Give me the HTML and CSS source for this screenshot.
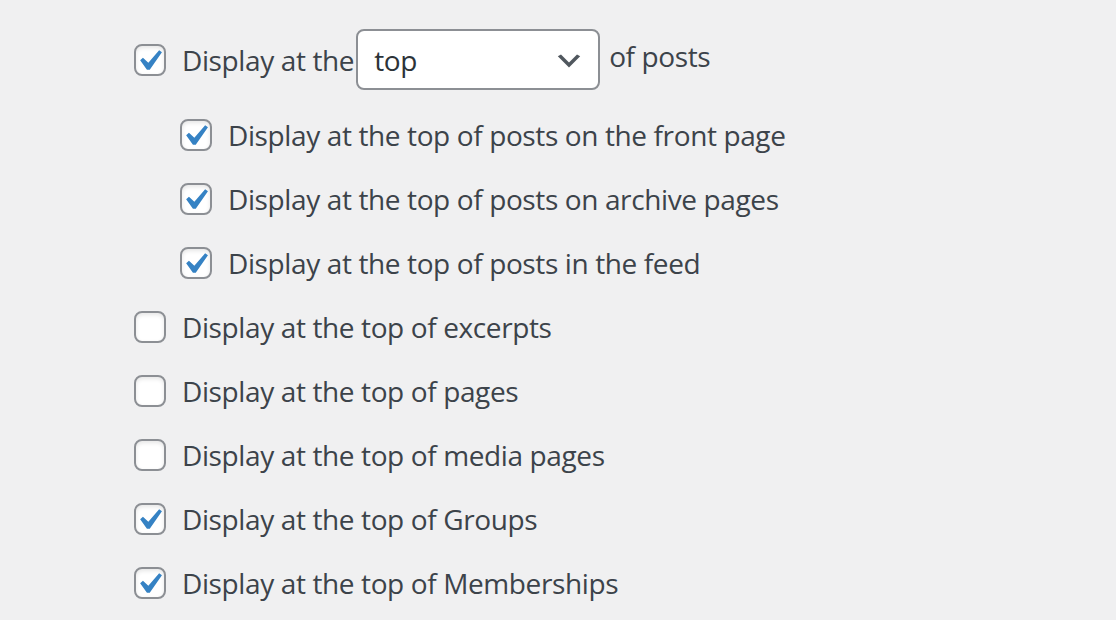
FILE: index.html
```html
<!DOCTYPE html>
<html lang="en">
<head>
  <meta charset="UTF-8" />
  <title>Display settings</title>
  <link rel="stylesheet" href="styles.css">
</head>
<body>
  <fieldset class="options">
    <label class="option option-select">
      <span class="box checked"><svg viewBox="0 0 20 20"><path d="M14.83 4.89l1.34.94-5.81 8.38H9.02L5.78 9.67l1.34-1.25 2.57 2.4z"/></svg></span>
      <span class="text">Display at the</span>
      <span class="select">
        <span>top</span>
        <svg viewBox="0 0 20 20"><path d="M5 6l5 5 5-5 2 1-7 7-7-7 2-1z"/></svg>
      </span>
      <span class="text after">of posts</span>
    </label>

    <label class="option sub">
      <span class="box checked"><svg viewBox="0 0 20 20"><path d="M14.83 4.89l1.34.94-5.81 8.38H9.02L5.78 9.67l1.34-1.25 2.57 2.4z"/></svg></span>
      <span class="text">Display at the top of posts on the front page</span>
    </label>
    <label class="option sub">
      <span class="box checked"><svg viewBox="0 0 20 20"><path d="M14.83 4.89l1.34.94-5.81 8.38H9.02L5.78 9.67l1.34-1.25 2.57 2.4z"/></svg></span>
      <span class="text">Display at the top of posts on archive pages</span>
    </label>
    <label class="option sub">
      <span class="box checked"><svg viewBox="0 0 20 20"><path d="M14.83 4.89l1.34.94-5.81 8.38H9.02L5.78 9.67l1.34-1.25 2.57 2.4z"/></svg></span>
      <span class="text">Display at the top of posts in the feed</span>
    </label>

    <label class="option">
      <span class="box"></span>
      <span class="text">Display at the top of excerpts</span>
    </label>
    <label class="option">
      <span class="box"></span>
      <span class="text">Display at the top of pages</span>
    </label>
    <label class="option">
      <span class="box"></span>
      <span class="text">Display at the top of media pages</span>
    </label>
    <label class="option">
      <span class="box checked"><svg viewBox="0 0 20 20"><path d="M14.83 4.89l1.34.94-5.81 8.38H9.02L5.78 9.67l1.34-1.25 2.57 2.4z"/></svg></span>
      <span class="text">Display at the top of Groups</span>
    </label>
    <label class="option">
      <span class="box checked"><svg viewBox="0 0 20 20"><path d="M14.83 4.89l1.34.94-5.81 8.38H9.02L5.78 9.67l1.34-1.25 2.57 2.4z"/></svg></span>
      <span class="text">Display at the top of Memberships</span>
    </label>
  </fieldset>
</body>
</html>
```

FILE: styles.css
```css
body {
  margin: 0;
  background: #f0f0f1;
  color: #3c434a;
  font-family: 'Open Sans', 'Noto Sans', sans-serif;
  font-size: 28px;
  letter-spacing: -0.38px;
  overflow: hidden;
}

.options {
  border: none;
  margin: 0;
  padding: 29px 0 0 134px;
  display: flex;
  flex-direction: column;
  gap: 24px;
}

.option {
  display: flex;
  align-items: center;
  height: 40px;
  line-height: 40px;
  white-space: nowrap;
}

.option-select {
  height: 61px;
  margin-bottom: 1px;
}

.option.sub {
  margin-left: 46px;
}

.box {
  box-sizing: border-box;
  flex: none;
  width: 32px;
  height: 32px;
  border: 2px solid #8c8f94;
  border-radius: 8px;
  background: #fff;
  box-shadow: inset 0 2px 4px rgba(0, 0, 0, 0.1);
  margin-right: 16px;
}

.box svg {
  display: block;
  width: 42px;
  height: 42px;
  margin: -6px 0 0 -8px;
  fill: #3582c4;
}

.text {
  display: block;
}

.select {
  box-sizing: border-box;
  flex: none;
  display: flex;
  align-items: center;
  justify-content: space-between;
  width: 244px;
  height: 61px;
  margin-left: 2px;
  padding: 0 13px 0 16px;
  border: 2px solid #8c8f94;
  border-radius: 8px;
  background: #fff;
  color: #2c3338;
}

.select svg {
  width: 32px;
  height: 32px;
  margin-top: 3px;
  fill: #50575e;
}

.after {
  margin-left: 9px;
  margin-bottom: 8px;
}
```
